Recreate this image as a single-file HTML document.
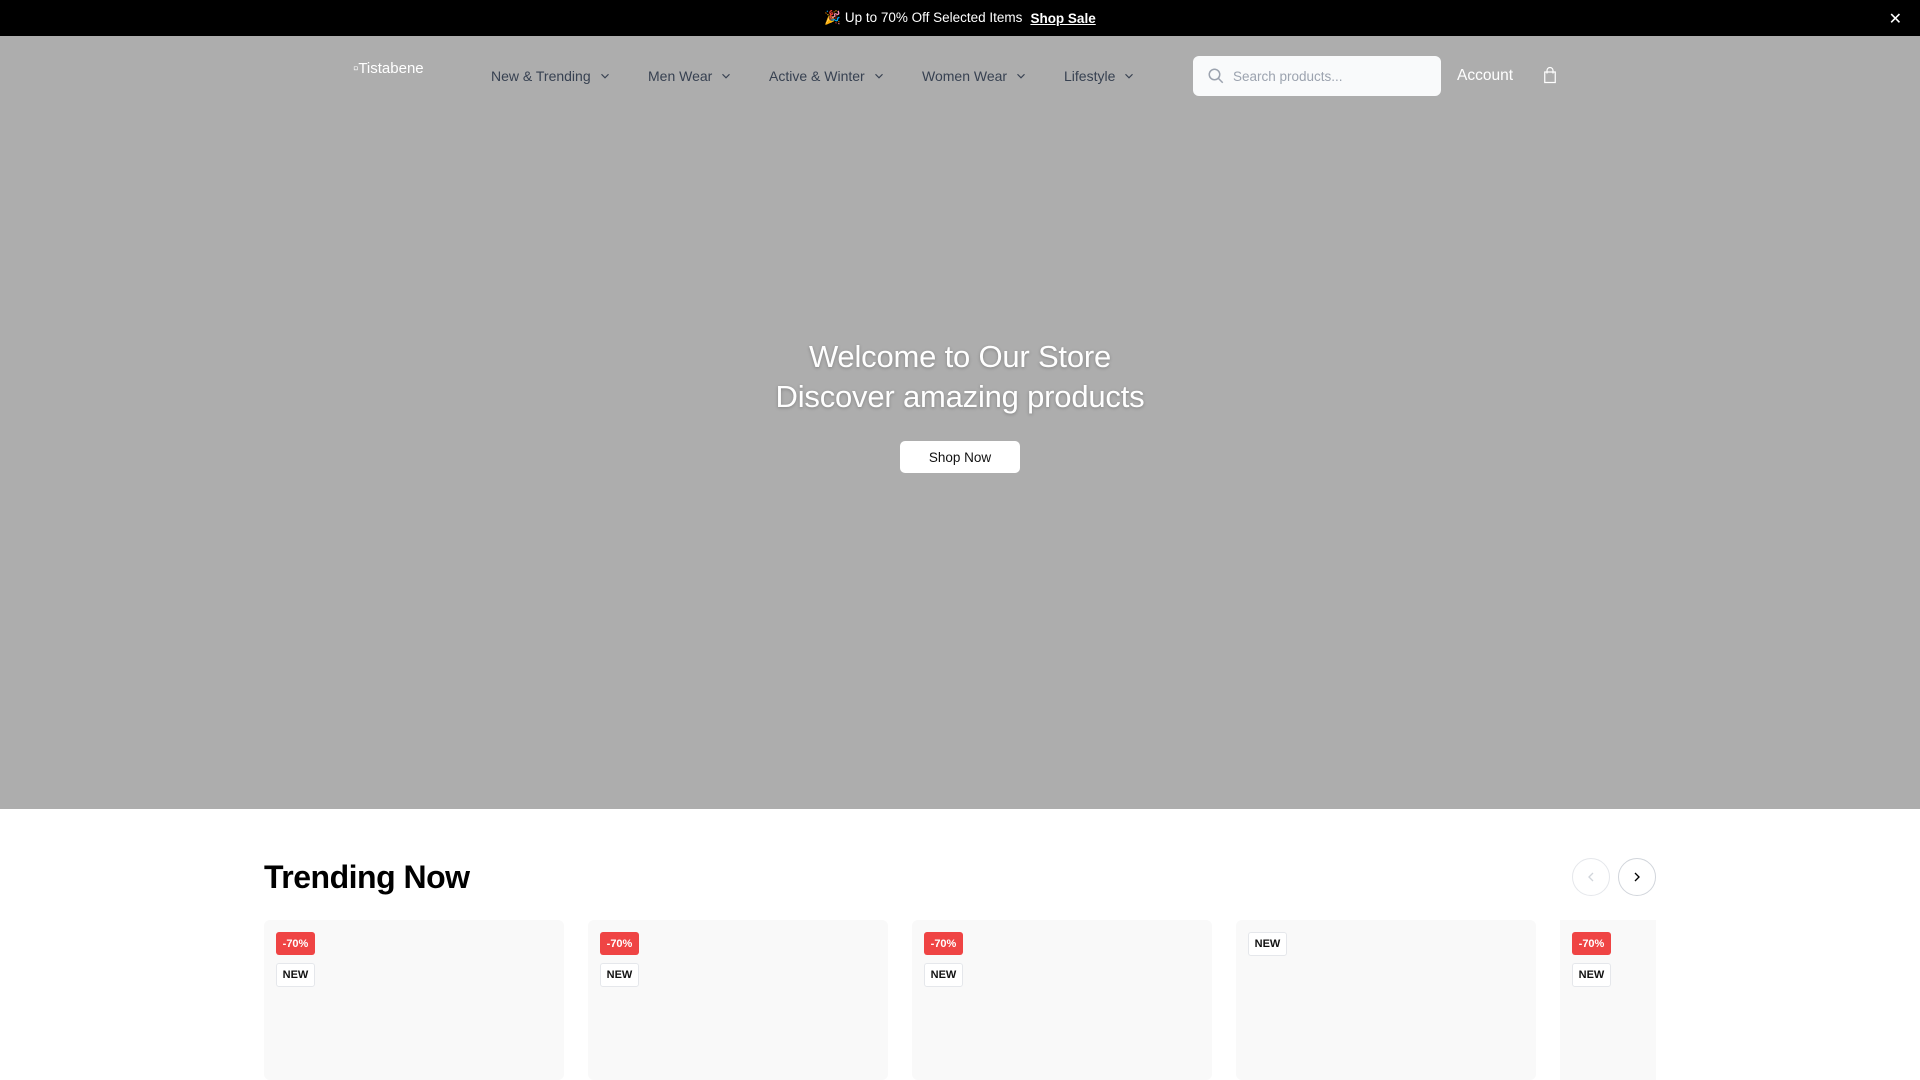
<!DOCTYPE html>
<html><head><meta charset="utf-8"><style>
*{box-sizing:border-box;margin:0;padding:0}
body{width:1920px;height:1080px;overflow:hidden;font-family:"Liberation Sans",sans-serif;background:#fff;position:relative}
.top{position:absolute;left:0;top:0;width:1920px;height:36px;background:#000;color:#fff;font-size:13.5px;display:flex;align-items:center;justify-content:center}
.top u{font-weight:bold;margin-left:8px}
.top .x{position:absolute;right:18px;top:9px;font-size:16px}
.hero{position:absolute;left:0;top:36px;width:1920px;height:773px;background:#adadad}
.nav{position:absolute;top:68px;font-size:14px;color:#374151;display:flex;align-items:center;gap:7px}
.nav svg{width:14px;height:14px}
.logo{position:absolute;left:353px;color:#fff;font-size:15px}
.search{position:absolute;left:1193px;top:56px;width:248px;height:40px;background:#f9fafb;border-radius:6px;display:flex;align-items:center;padding-left:14px;color:#9ca3af;font-size:13.5px}
.htext{position:absolute;left:0;width:1920px;text-align:center;color:#fff;font-size:31px;letter-spacing:-0.2px;text-shadow:0 1px 3px rgba(0,0,0,.25)}
.btn{position:absolute;left:900px;width:120px;height:32px;background:#fff;border-radius:5px;font-size:13.5px;color:#111;display:flex;align-items:center;justify-content:center}
h2{position:absolute;left:264px;top:859px;font-size:32px;font-weight:bold;color:#000;letter-spacing:-0.5px}
.arr{position:absolute;top:858px;width:38px;height:38px;border-radius:50%;border:1px solid #d1d5db;display:flex;align-items:center;justify-content:center;background:#fff}
.card{position:absolute;top:920px;width:300px;height:160px;background:#f9f9f9;border-radius:6px}
.b1{position:absolute;left:12px;top:12px;width:39px;height:23px;background:#ef4444;color:#fff;font-size:11px;font-weight:bold;border-radius:3px;display:flex;align-items:center;justify-content:center}
.b2{position:absolute;left:12px;width:39px;height:24px;background:#fff;color:#111;font-size:11px;font-weight:bold;border-radius:3px;border:1px solid #e5e7eb;display:flex;align-items:center;justify-content:center}
</style></head><body>
<div class="top">🎉 Up to 70% Off Selected Items <u>Shop Sale</u><span class="x">✕</span></div>
<div class="hero">
<div class="logo" style="top:24px">▫Tistabene</div>
<div class="htext" style="top:303px">Welcome to Our Store</div>
<div class="htext" style="top:343px">Discover amazing products</div>
<div class="btn" style="top:405px">Shop Now</div>
</div>
<div class="nav" style="left:491px">New &amp; Trending <svg viewBox="0 0 24 24" fill="none" stroke="#374151" stroke-width="2"><path d="M6 9l6 6 6-6"/></svg></div>
<div class="nav" style="left:648px">Men Wear <svg viewBox="0 0 24 24" fill="none" stroke="#374151" stroke-width="2"><path d="M6 9l6 6 6-6"/></svg></div>
<div class="nav" style="left:769px">Active &amp; Winter <svg viewBox="0 0 24 24" fill="none" stroke="#374151" stroke-width="2"><path d="M6 9l6 6 6-6"/></svg></div>
<div class="nav" style="left:922px">Women Wear <svg viewBox="0 0 24 24" fill="none" stroke="#374151" stroke-width="2"><path d="M6 9l6 6 6-6"/></svg></div>
<div class="nav" style="left:1064px">Lifestyle <svg viewBox="0 0 24 24" fill="none" stroke="#374151" stroke-width="2"><path d="M6 9l6 6 6-6"/></svg></div>
<div class="search"><svg width="18" height="18" viewBox="0 0 24 24" fill="none" stroke="#9ca3af" stroke-width="2"><circle cx="10" cy="10" r="7"/><path d="M15 15l6 6"/></svg><span style="margin-left:8px">Search products...</span></div>
<div style="position:absolute;left:1457px;top:67px;color:#fff;font-size:15.5px">Account</div>
<svg style="position:absolute;left:1541px;top:66px" width="18" height="18" viewBox="0 0 24 24" fill="none" stroke="#fff" stroke-width="1.6"><path d="M5 8h14v14H5z"/><path d="M8 10V6a4 4 0 0 1 8 0v4"/></svg>
<h2>Trending Now</h2>
<div class="arr" style="left:1572px;border-color:#e5e7eb"><svg width="16" height="16" viewBox="0 0 24 24" fill="none" stroke="#d1d5db" stroke-width="2"><path d="M15 6l-6 6 6 6"/></svg></div>
<div class="arr" style="left:1618px"><svg width="16" height="16" viewBox="0 0 24 24" fill="none" stroke="#000" stroke-width="2"><path d="M9 6l6 6-6 6"/></svg></div>
<div class="card" style="left:264px"><div class="b1">-70%</div><div class="b2" style="top:43px">NEW</div></div>
<div class="card" style="left:588px"><div class="b1">-70%</div><div class="b2" style="top:43px">NEW</div></div>
<div class="card" style="left:912px"><div class="b1">-70%</div><div class="b2" style="top:43px">NEW</div></div>
<div class="card" style="left:1236px"><div class="b2" style="top:12px">NEW</div></div>
<div class="card" style="left:1560px;width:96px;border-radius:0"><div class="b1">-70%</div><div class="b2" style="top:43px">NEW</div></div>
</body></html>
